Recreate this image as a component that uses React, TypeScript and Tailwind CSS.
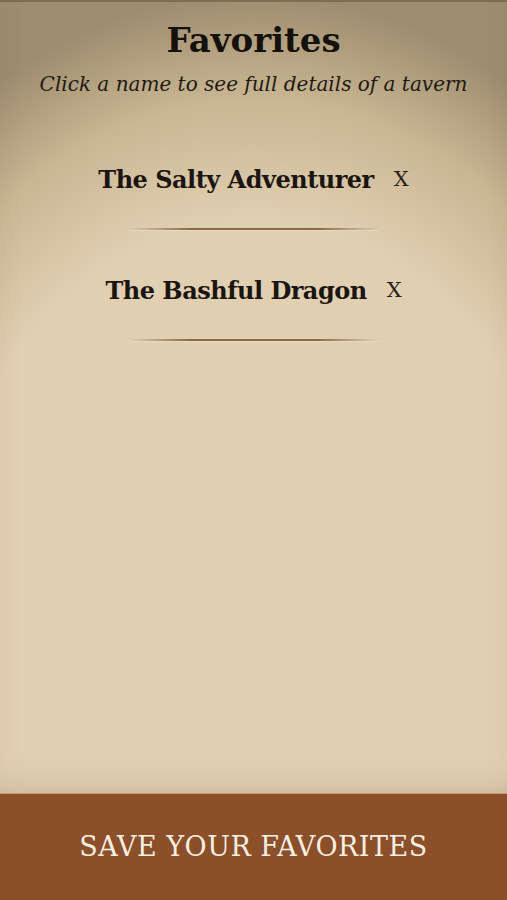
import React from "react";

const favorites = ["The Salty Adventurer", "The Bashful Dragon"];

function Divider() {
  return (
    <div className="mx-auto mt-[11px] h-[2px] w-[250px] bg-[linear-gradient(90deg,rgba(138,106,69,0)_0%,#8a6a45_25%,#8a6a45_75%,rgba(138,106,69,0)_100%)] shadow-[0_1px_1px_rgba(255,255,255,0.25)]" />
  );
}

function FavoriteRow({ name }: { name: string }) {
  return (
    <li className="flex flex-col">
      <div className="flex h-[74px] items-center justify-center gap-5">
        <button className="text-[24px] font-bold tracking-[-0.5px] text-[#1a1510]">
          {name}
        </button>
        <button className="text-[21px] text-[#2a2218]">X</button>
      </div>
      <Divider />
    </li>
  );
}

export default function App() {
  return (
    <div className="flex h-[900px] w-full flex-col bg-[#e1cfb2] font-['DejaVu_Serif',serif]">
      <main className="flex flex-1 flex-col border-t-2 border-[#7d6d52] bg-[radial-gradient(ellipse_110%_90%_at_50%_80%,#e1cfb2_58%,#c9b692_75%,#9d8c6e_90%)] shadow-[inset_0_-20px_40px_-30px_rgba(120,100,70,0.5)]">
        <header className="flex flex-col items-center pt-[14px]">
          <h1 className="text-[34px] leading-[48px] font-bold text-[#14110c]">
            Favorites
          </h1>
          <p className="mt-[7px] text-[20px] leading-[26px] italic text-[#1f1a13]">
            Click a name to see full details of a tavern
          </p>
        </header>
        <ul className="mt-[46px] flex flex-col gap-[24px]">
          {favorites.map((f) => (
            <FavoriteRow key={f} name={f} />
          ))}
        </ul>
      </main>
      <button className="h-[107px] w-full border-t border-[#c79a6a] bg-[#8b4f29] text-[27px] tracking-[0.5px] text-[#f6eee2]">
        SAVE YOUR FAVORITES
      </button>
    </div>
  );
}
